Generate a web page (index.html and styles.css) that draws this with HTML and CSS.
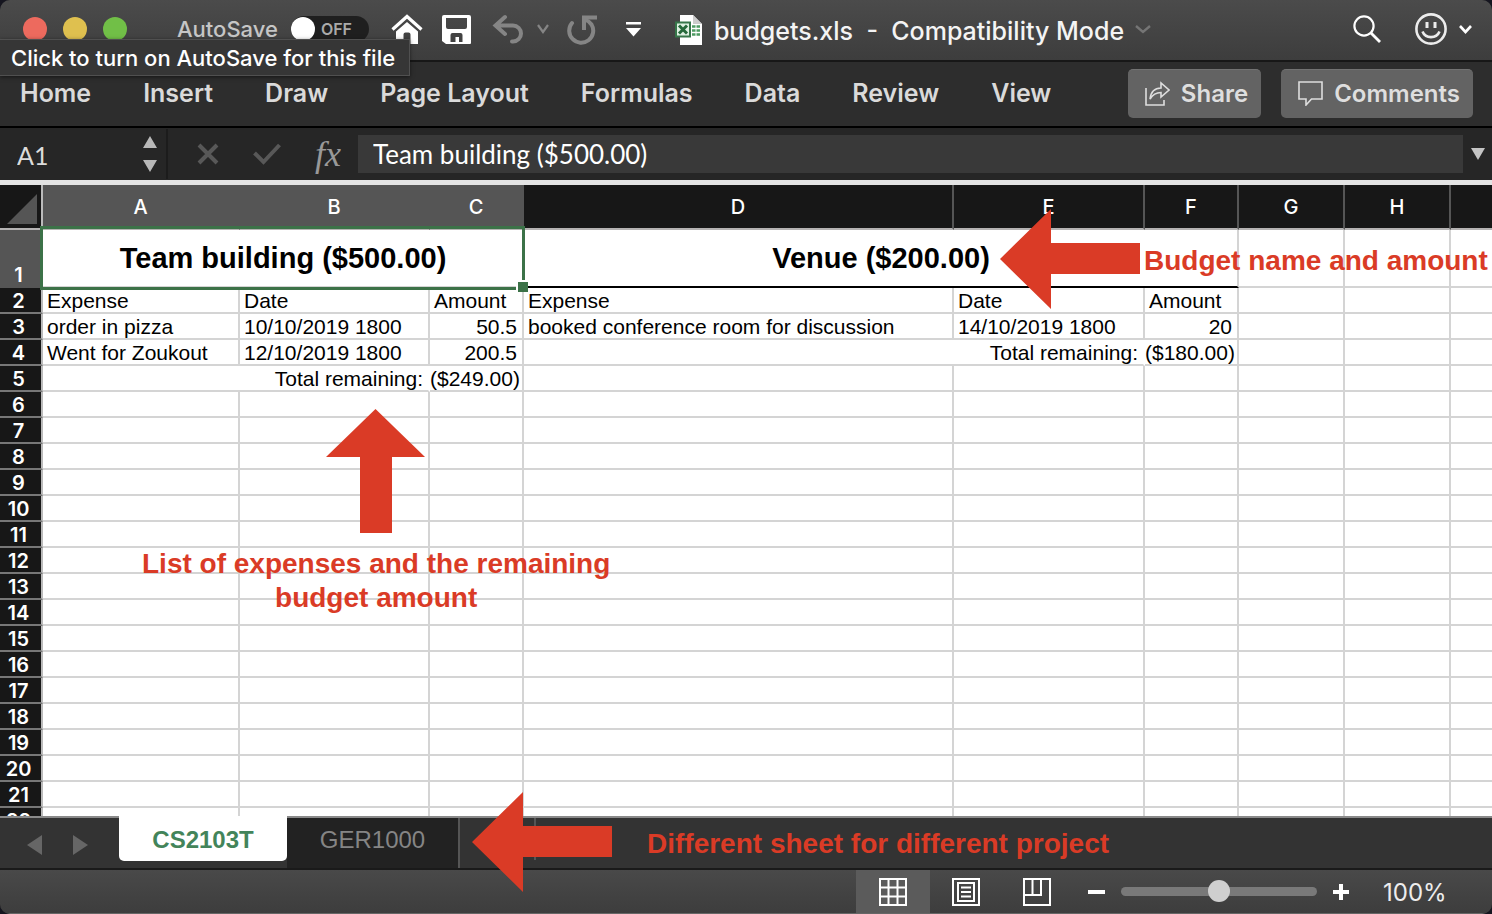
FILE: index.html
```html
<!DOCTYPE html>
<html lang="en">
<head>
<meta charset="utf-8">
<title>budgets.xls - Compatibility Mode</title>
<link rel="stylesheet" href="styles.css">
</head>
<body>
<div class="window">
  <header class="titlebar">
    <div class="lights">
      <button class="light light-close" aria-label="Close"></button>
      <button class="light light-min" aria-label="Minimize"></button>
      <button class="light light-zoom" aria-label="Zoom"></button>
    </div>
    <label class="autosave">AutoSave
      <span class="switch"><input type="checkbox" class="switch-input"><span class="switch-text">OFF</span></span>
    </label>
    <div class="quick">
      <button class="icon-btn" aria-label="Home"><svg width="32" height="30" viewBox="0 0 32 30"><path d="M1.500 15.500 16 2.500l14.500 13" fill="none" stroke="#fff" stroke-width="3.200"/><path d="M5 17.500 16 8l11 9.500V30h-7.500v-9.500a2 2 0 0 0-2-2h-3a2 2 0 0 0-2 2V30H5z" fill="#fff"/></svg></button>
      <button class="icon-btn save" aria-label="Save"><svg width="29" height="30" viewBox="0 0 29 30"><path fill="#fff" fill-rule="evenodd" d="M2 1h25q2 0 2 2v26q0 1-1 1H4l-4-3V3q0-2 2-2zM4 4v9q0 2 2 2h17q2 0 2-2V4zM8.500 28h5v-5h3.500v5h3.500v-7q0-2-2-2h-8q-2 0-2 2z"/></svg></button>
      <button class="icon-btn undo" aria-label="Undo"><svg width="32" height="30" viewBox="0 0 32 30" fill="none" stroke="#858585" stroke-width="4" stroke-linecap="round"><path d="M13 3 3.500 11.500 13 20M4 11.500h17a8 8 0 0 1 0 16h-1"/></svg></button>
      <button class="icon-btn undo-more" aria-label="Undo history"><svg width="12" height="10" viewBox="0 0 12 10" fill="none" stroke="#858585" stroke-width="2.200"><path d="m1 1 5 7 5-7"/></svg></button>
      <button class="icon-btn redo" aria-label="Repeat"><svg width="30" height="31" viewBox="0 0 30 31" fill="none" stroke="#858585" stroke-width="4"><path d="M5 9a12 12 0 1 0 19.500 1.500Q22 7 17 5" stroke-linecap="round"/><path d="M17 16V3.500h13"/></svg></button>
      <button class="icon-btn more" aria-label="Customize toolbar"><svg width="15" height="16" viewBox="0 0 15 16" fill="#fff"><path d="M0 1h15v2.500H0zM0 7h15l-7.500 8.500z"/></svg></button>
    </div>
    <div class="doc">
      <svg width="28" height="31" viewBox="0 0 28 31"><path d="M6 1h12l9 9v21H5V1z" fill="#fff"/><path d="m18 1 9 9h-9z" fill="#ccc"/><g stroke="#4d9a62" stroke-width="2.500"><path d="M17 12.500h8M17 16.500h8M17 20.500h8"/></g><path d="M21 11v12" stroke="#fff"/><path d="M1 8.500h14v14H1z" fill="#dff0e2" stroke="#37764a" stroke-width="2"/><path d="m4 11.500 8 8m0-8-8 8" stroke="#26693b" stroke-width="3"/></svg>
      <h1 class="doc-name">budgets.xls&nbsp; -&nbsp; Compatibility Mode</h1>
      <svg width="16" height="9" viewBox="0 0 16 9" fill="none" stroke="#757575" stroke-width="2.400"><path d="m1 1 7 6 7-6"/></svg>
    </div>
    <div class="account">
      <button class="icon-btn" aria-label="Search"><svg width="28" height="28" viewBox="0 0 28 28" fill="none" stroke="#fff" stroke-width="2.200"><circle cx="11" cy="11" r="9.600"/><path d="m18 18 9 9" stroke-width="2.800"/></svg></button>
      <button class="icon-btn smile" aria-label="Feedback"><svg width="32" height="32" viewBox="0 0 32 32" fill="none" stroke="#ececec"><circle cx="16" cy="16" r="14.600" stroke-width="2.600"/><path d="M12 9v6M20 9v6" stroke-width="3"/><path d="M7.500 18.500c3 7.500 14 7.500 17 0" stroke-width="2.600"/></svg><svg width="13" height="9" viewBox="0 0 13 9" fill="none" stroke="#fff" stroke-width="2.600"><path d="m1 1 5.500 6L12 1"/></svg></button>
    </div>
  </header>

  <div class="ribbon">
    <nav class="ribbon-tabs">
      <button class="ribbon-tab">Home</button>
      <button class="ribbon-tab">Insert</button>
      <button class="ribbon-tab">Draw</button>
      <button class="ribbon-tab">Page Layout</button>
      <button class="ribbon-tab">Formulas</button>
      <button class="ribbon-tab">Data</button>
      <button class="ribbon-tab">Review</button>
      <button class="ribbon-tab">View</button>
    </nav>
    <div class="ribbon-actions">
      <button class="action"><svg width="25" height="25" viewBox="0 0 25 25" fill="none" stroke="#dedede" stroke-width="1.600"><path d="M1 7v17h18v-5"/><path d="M5 18C6 10 10 7 16 7V2l8 7-8 7v-4.500C11 11.500 8 13 5 18z"/></svg>Share</button>
      <button class="action"><svg width="25" height="25" viewBox="0 0 25 25" fill="none" stroke="#dedede" stroke-width="1.600"><path d="M1 1h23v17H13.500L8 24v-6H1z"/></svg>Comments</button>
    </div>
  </div>

  <div class="formula-bar">
    <div class="namebox">
      <input class="name-input" aria-label="Name box" value="A1">
      <svg width="14" height="36" viewBox="0 0 14 36" fill="#b8b8b8"><path d="M7 0l7 12H0zM0 24h14L7 36z"/></svg>
    </div>
    <div class="formula-tools">
      <button class="icon-btn" aria-label="Cancel"><svg width="22" height="22" viewBox="0 0 22 22" stroke="#585858" stroke-width="4"><path d="m2 2 18 18M20 2 2 20"/></svg></button>
      <button class="icon-btn" aria-label="Enter"><svg width="28" height="22" viewBox="0 0 28 22" fill="none" stroke="#585858" stroke-width="4"><path d="m1.500 10 9 9L26.500 2"/></svg></button>
      <button class="icon-btn fx" aria-label="Insert function">fx</button>
    </div>
    <input class="formula-input" aria-label="Formula" value="Team building ($500.00)">
    <button class="icon-btn expand" aria-label="Expand formula bar"><svg width="14" height="12" viewBox="0 0 14 12" fill="#c4c4c4"><path d="M0 0h14L7 12z"/></svg></button>
  </div>

  <main class="grid">
    <table class="sheet">
      <colgroup><col class="c-head"><col class="c-a"><col class="c-b"><col class="c-c"><col class="c-d"><col class="c-e"><col class="c-f"><col class="c-g"><col class="c-g"><col></colgroup>
      <thead>
        <tr><th class="corner"><svg width="30" height="30" viewBox="0 0 30 30"><path d="M30 0v30H0z" fill="#555"/></svg></th><th class="sel">A</th><th class="sel">B</th><th class="sel">C</th><th>D</th><th>E</th><th>F</th><th>G</th><th>H</th><th></th></tr>
      </thead>
      <tbody>
        <tr class="tall"><th class="sel">1</th><td colspan="3" class="title active">Team building ($500.00)<span class="handle"></span></td><td colspan="3" class="title ruled">Venue ($200.00)</td><td></td><td></td><td></td></tr>
        <tr><th>2</th><td>Expense</td><td>Date</td><td>Amount</td><td>Expense</td><td>Date</td><td>Amount</td><td></td><td></td><td></td></tr>
        <tr><th>3</th><td>order in pizza</td><td>10/10/2019 1800</td><td class="num">50.5</td><td>booked conference room for discussion</td><td>14/10/2019 1800</td><td class="num">20</td><td></td><td></td><td></td></tr>
        <tr><th>4</th><td>Went for Zoukout</td><td>12/10/2019 1800</td><td class="num">200.5</td><td colspan="2" class="total">Total remaining:</td><td class="sum">($180.00)</td><td></td><td></td><td></td></tr>
        <tr><th>5</th><td colspan="2" class="total">Total remaining:</td><td class="sum">($249.00)</td><td></td><td></td><td></td><td></td><td></td><td></td></tr>
        <tr><th>6</th><td></td><td></td><td></td><td></td><td></td><td></td><td></td><td></td><td></td></tr>
        <tr><th>7</th><td></td><td></td><td></td><td></td><td></td><td></td><td></td><td></td><td></td></tr>
        <tr><th>8</th><td></td><td></td><td></td><td></td><td></td><td></td><td></td><td></td><td></td></tr>
        <tr><th>9</th><td></td><td></td><td></td><td></td><td></td><td></td><td></td><td></td><td></td></tr>
        <tr><th>10</th><td></td><td></td><td></td><td></td><td></td><td></td><td></td><td></td><td></td></tr>
        <tr><th>11</th><td></td><td></td><td></td><td></td><td></td><td></td><td></td><td></td><td></td></tr>
        <tr><th>12</th><td></td><td></td><td></td><td></td><td></td><td></td><td></td><td></td><td></td></tr>
        <tr><th>13</th><td></td><td></td><td></td><td></td><td></td><td></td><td></td><td></td><td></td></tr>
        <tr><th>14</th><td></td><td></td><td></td><td></td><td></td><td></td><td></td><td></td><td></td></tr>
        <tr><th>15</th><td></td><td></td><td></td><td></td><td></td><td></td><td></td><td></td><td></td></tr>
        <tr><th>16</th><td></td><td></td><td></td><td></td><td></td><td></td><td></td><td></td><td></td></tr>
        <tr><th>17</th><td></td><td></td><td></td><td></td><td></td><td></td><td></td><td></td><td></td></tr>
        <tr><th>18</th><td></td><td></td><td></td><td></td><td></td><td></td><td></td><td></td><td></td></tr>
        <tr><th>19</th><td></td><td></td><td></td><td></td><td></td><td></td><td></td><td></td><td></td></tr>
        <tr><th>20</th><td></td><td></td><td></td><td></td><td></td><td></td><td></td><td></td><td></td></tr>
        <tr><th>21</th><td></td><td></td><td></td><td></td><td></td><td></td><td></td><td></td><td></td></tr>
        <tr><th>22</th><td></td><td></td><td></td><td></td><td></td><td></td><td></td><td></td><td></td></tr>
      </tbody>
    </table>
  </main>

  <div class="sheet-bar">
    <div class="sheet-nav">
      <button class="icon-btn" aria-label="Previous sheet"><svg width="15" height="20" viewBox="0 0 15 20" fill="#666"><path d="M15 0v20L0 10z"/></svg></button>
      <button class="icon-btn" aria-label="Next sheet"><svg width="15" height="20" viewBox="0 0 15 20" fill="#666"><path d="M0 0v20l15-10z"/></svg></button>
    </div>
    <button class="sheet-tab current">CS2103T</button>
    <button class="sheet-tab">GER1000</button>
    <button class="sheet-add" aria-label="Add sheet"></button>
  </div>

  <footer class="status">
    <button class="view on" aria-label="Normal view"><svg width="28" height="28" viewBox="0 0 28 28" fill="none" stroke="#fff" stroke-width="2"><path d="M1 1h26v26H1zM9.500 1v26M18.500 1v26M1 9.500h26M1 18.500h26"/></svg></button>
    <button class="view" aria-label="Page layout view"><svg width="28" height="28" viewBox="0 0 28 28" fill="none" stroke="#fff" stroke-width="2"><path d="M1 1h26v26H1zM6 5h16v18H6zM9 9.500h10M9 14h10M9 18.500h10"/></svg></button>
    <button class="view" aria-label="Page break view"><svg width="28" height="28" viewBox="0 0 28 28" fill="none" stroke="#fff" stroke-width="2"><path d="M1 1h26v26H1zM1 17h17V1M9.500 1v16"/></svg></button>
    <div class="zoom">
      <button class="icon-btn" aria-label="Zoom out"><svg width="17" height="16" viewBox="0 0 17 16"><path d="M0 6h17v4H0z" fill="#fff"/></svg></button>
      <input class="zoom-range" type="range" min="0" max="200" value="100" aria-label="Zoom">
      <button class="icon-btn" aria-label="Zoom in"><svg width="16" height="16" viewBox="0 0 16 16"><path d="M0 6h6V0h4v6h6v4h-6v6H6v-6H0z" fill="#fff"/></svg></button>
    </div>
    <output class="zoom-value">100%</output>
  </footer>

  <div class="tooltip" role="tooltip">Click to turn on AutoSave for this file</div>
  <svg class="arrow arrow-name" width="140" height="100" viewBox="0 0 140 100"><path d="M0 50 51 0v34h89v31H51v35z" fill="#da3b26"/></svg>
  <p class="note note-name">Budget name and amount</p>
  <svg class="arrow arrow-list" width="99" height="124" viewBox="0 0 99 124"><path d="m49.500 0 49.500 48H66v76H34V48H0z" fill="#da3b26"/></svg>
  <p class="note note-list">List of expenses and the remaining<br>budget amount</p>
  <svg class="arrow arrow-sheet" width="140" height="100" viewBox="0 0 140 100"><path d="M0 50 51 0v34h89v31H51v35z" fill="#da3b26"/></svg>
  <p class="note note-sheet">Different sheet for different project</p>
</div>
</body>
</html>
```
FILE: styles.css
```css
* { box-sizing: border-box; }
body { margin: 0; background: #15151f; font-family: Inter, "Liberation Sans", sans-serif; }
button, input { font-family: inherit; border: 0; padding: 0; margin: 0; background: none; color: inherit; }
svg { display: block; flex: none; }

.window { position: relative; display: flex; flex-direction: column; height: 100vh; border-radius: 10px; overflow: hidden; background: #262626; color: #fff; }
.icon-btn { display: flex; align-items: center; flex: none; }

.titlebar { display: flex; align-items: center; flex: none; height: 62px; padding: 0 20px 2px 23px; background: linear-gradient(#4b4b4b, #3d3d3d); border-bottom: 2px solid #171717; }
.lights { display: flex; gap: 16px; margin-right: 50px; }
.light { width: 24px; height: 24px; border-radius: 50%; }
.light-close { background: #ed6a5e; }
.light-min { background: #dfc04f; }
.light-zoom { background: #71bf47; }
.autosave { display: flex; align-items: center; gap: 13px; font-size: 22px; font-weight: 500; color: #c6c6c6; }
.switch { display: flex; align-items: center; width: 78px; height: 26px; border-radius: 13px; background: #1f1f1f; }
.switch-input { appearance: none; width: 24px; height: 24px; border-radius: 50%; background: #fff; }
.switch-text { margin-left: 6px; font-size: 16px; font-weight: 600; color: #aaa; }
.quick { display: flex; align-items: center; margin-left: 22px; }
.save { margin-left: 19px; }
.undo { margin-left: 21px; }
.undo-more { margin-left: 13px; }
.redo { margin-left: 18px; }
.more { margin-left: 29px; }
.doc { display: flex; align-items: center; gap: 11px; margin-left: 34px; }
.doc-name { margin: 0; padding-top: 4px; font-size: 25px; font-weight: 500; line-height: 32px; color: #f4f4f4; white-space: nowrap; }
.account { display: flex; align-items: center; gap: 34px; margin-left: auto; }
.smile { gap: 12px; }

.ribbon { display: flex; align-items: center; justify-content: space-between; flex: none; height: 66px; padding: 0 19px 2px 20px; background: #2d2d2d; border-bottom: 2px solid #000; }
.ribbon-tabs { display: flex; gap: 52px; }
.ribbon-tab { font-size: 25px; font-weight: 600; line-height: 32px; color: #dadada; white-space: nowrap; }
.ribbon-actions { display: flex; gap: 20px; }
.action { display: flex; align-items: center; gap: 11px; height: 49px; padding: 0 13px 0 17px; border-radius: 5px; background: #636363; border-top: 1px solid #727272; font-size: 24px; font-weight: 600; color: #dedede; }

.formula-bar { display: flex; align-items: center; flex: none; height: 52px; background: #262626; font-family: Lato, sans-serif; }
.namebox { display: flex; align-items: center; justify-content: space-between; flex: none; width: 168px; height: 50px; padding: 0 9px 0 17px; border-right: 2px solid #1c1c1c; }
.name-input { width: 100px; padding-top: 2px; font-size: 25px; color: #dcdcdc; }
.formula-tools { display: flex; align-items: center; gap: 34px; flex: none; width: 190px; padding-left: 29px; }
.fx { font-family: "Liberation Serif", serif; font-size: 36px; font-style: italic; line-height: 36px; color: #999; }
.formula-input { flex: 1; min-width: 0; height: 38px; padding: 0 15px; background: #393939; font-size: 26px; color: #fff; }
.expand { width: 29px; padding-left: 8px; }

.grid { flex: 1; min-height: 0; overflow: hidden; background: #fff; border-top: 5px solid #e4e4e4; }
.sheet { width: 100%; table-layout: fixed; border-collapse: separate; border-spacing: 0; font-family: "Liberation Sans", Arial, sans-serif; font-size: 21px; line-height: 22px; color: #000; }
.c-head { width: 43px; }
.c-a { width: 197px; }
.c-b { width: 190px; }
.c-c, .c-f { width: 94px; }
.c-d { width: 430px; }
.c-e { width: 191px; }
.c-g { width: 106px; }
.sheet th { padding: 0; font-family: Inter, sans-serif; font-size: 20px; font-weight: 500; color: #fff; background: #171717; }
.sheet thead th { height: 45px; border-right: 2px solid #555; border-bottom: 2px solid #b5b3b3; }
.sheet thead .sel { background: #555; }
.sheet thead .corner { border-right-color: #bbb; vertical-align: bottom; }
.corner svg { margin: 0 0 4px 7px; }
.sheet tbody th { padding: 2px 4px 0 0; font-weight: 600; border-right: 2px solid #bbb; border-bottom: 2px solid #777; }
.sheet tbody .sel { background: #555; vertical-align: bottom; border-bottom-color: #555; }
.sheet td { height: 26px; padding: 2px 5px 0 4px; border-right: 2px solid #d4d4d4; border-bottom: 2px solid #d4d4d4; white-space: nowrap; }
.sheet tr > :last-child { border-right: 0; }
.sheet .tall td { height: 58px; }
.sheet .title { padding: 0 3px 0 4px; text-align: center; font-size: 29px; font-weight: 700; border-right-color: #fff; }
.sheet .ruled { border-right-color: #d4d4d4; border-bottom-color: #000; }
.sheet .num { text-align: right; }
.sheet .total { text-align: right; border-right-color: #fff; }
.sheet .sum { padding: 2px 3px 0 0; text-align: right; }
.active { position: relative; }
.active::after { content: ""; position: absolute; inset: -4px -3px -4px -3px; border: 3px solid #3c7248; }
.handle { position: absolute; z-index: 1; right: -6px; bottom: -6px; width: 12px; height: 12px; background: #3c7248; border: solid #fff; border-width: 2px 0 0 2px; }

.sheet-bar { display: flex; align-items: flex-start; flex: none; height: 54px; background: #333; border-top: 2px solid #8a8a8a; border-bottom: 2px solid #1a1a1a; font-family: "Liberation Sans", Arial, sans-serif; }
.sheet-nav { display: flex; gap: 31px; width: 119px; padding: 17px 0 0 27px; }
.sheet-tab { width: 173px; height: 50px; padding-bottom: 7px; background: #222; font-size: 24px; color: #858585; border-right: 2px solid #555; }
.sheet-tab.current { width: 168px; height: 45px; margin-top: -2px; padding: 2px 0 0; border: 0; border-radius: 0 0 5px 5px; background: #fff; font-weight: 700; color: #43845a; }
.sheet-add { width: 76px; height: 42px; border-right: 2px solid #555; }

.status { display: flex; align-items: center; justify-content: flex-end; flex: none; height: 44px; padding-right: 41px; background: linear-gradient(#494949, #3d3d3d); border-bottom: 1px solid #666; }
.view { display: flex; align-items: center; justify-content: center; width: 71px; height: 43px; }
.view.on { width: 74px; background: #5b5b5b; }
.zoom { display: flex; align-items: center; gap: 16px; margin-left: 16px; }
.zoom-range { appearance: none; width: 196px; height: 24px; }
.zoom-range::-webkit-slider-runnable-track { height: 9px; border-radius: 5px; background: #797979; }
.zoom-range::-webkit-slider-thumb { appearance: none; width: 22px; height: 22px; margin-top: -7px; border-radius: 50%; background: #cfcfcf; }
.zoom-value { width: 68px; margin-left: 34px; padding-top: 2px; font-size: 24px; color: #ededed; }

.tooltip { position: absolute; left: 0; top: 39px; width: 410px; height: 37px; padding-left: 11px; background: #363636; border: 1px solid #505050; border-left: 0; box-shadow: 0 1px 4px #0008; font-size: 22px; font-weight: 500; line-height: 36px; white-space: nowrap; }
.arrow { position: absolute; }
.arrow-name { left: 1000px; top: 209px; }
.arrow-list { left: 326px; top: 409px; }
.arrow-sheet { left: 472px; top: 792px; }
.note { position: absolute; margin: 0; font-family: "Liberation Sans", Arial, sans-serif; font-size: 28px; font-weight: 700; line-height: 34px; color: #da3b26; text-align: center; white-space: nowrap; }
.note-name { left: 1144px; top: 244px; }
.note-list { left: 142px; top: 547px; }
.note-sheet { left: 647px; top: 827px; }
```
